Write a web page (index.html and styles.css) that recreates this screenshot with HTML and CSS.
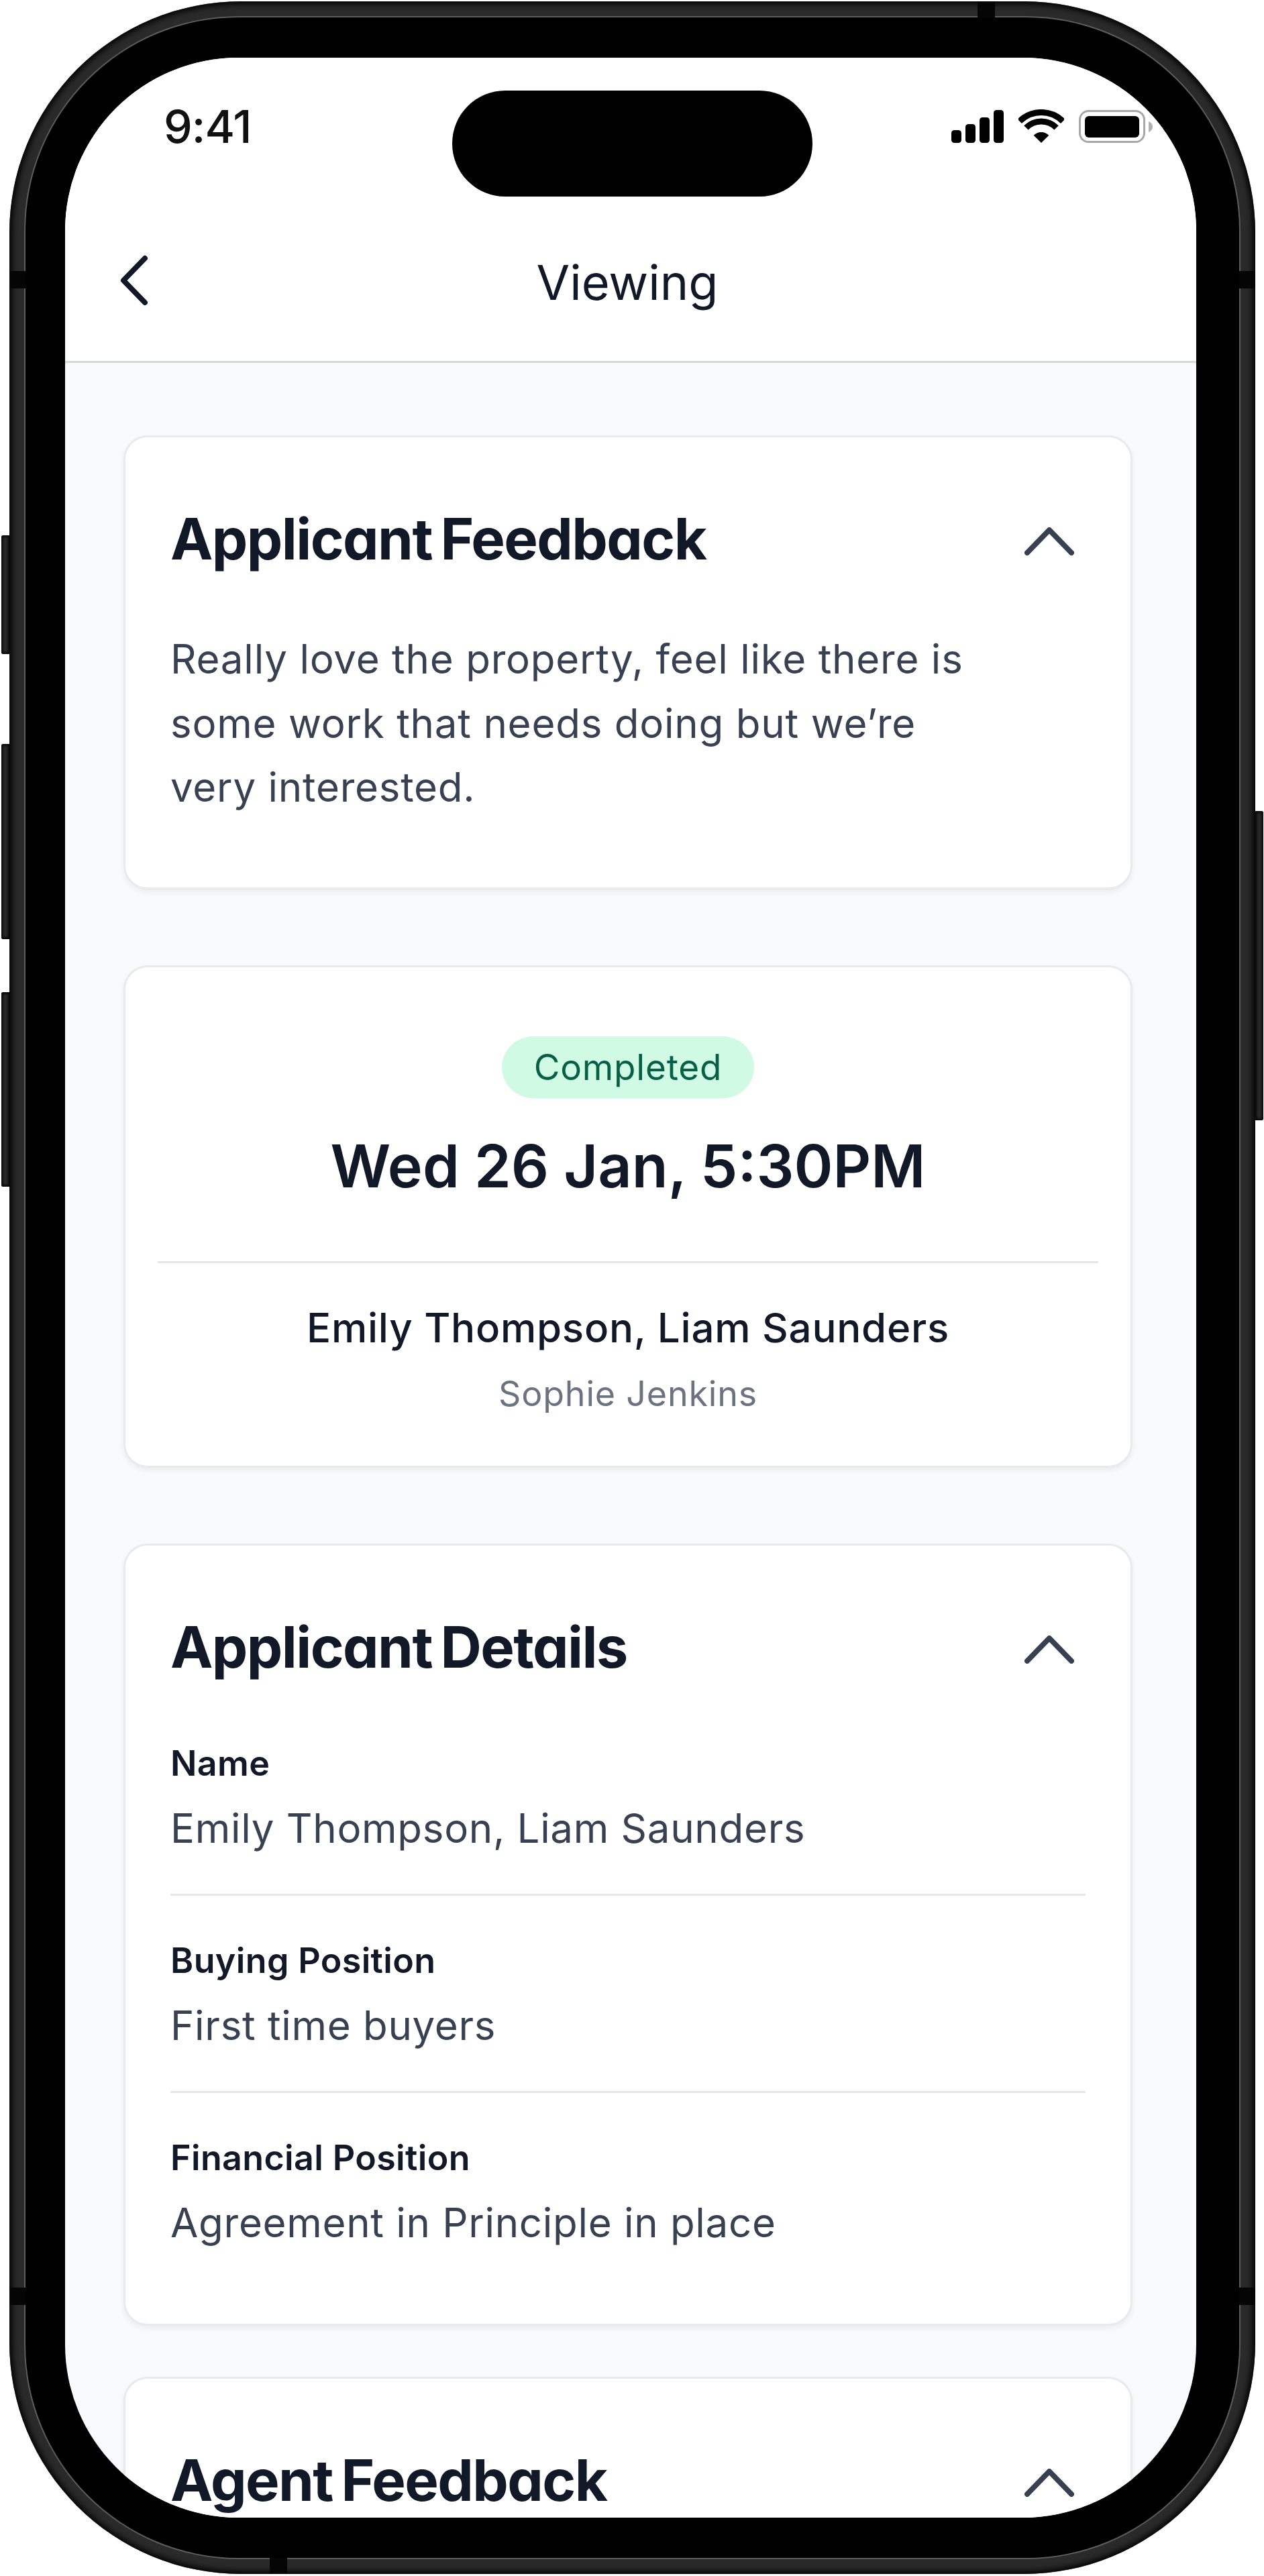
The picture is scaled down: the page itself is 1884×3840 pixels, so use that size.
FILE: index.html
```html
<!DOCTYPE html>
<html lang="en">
<head>
    <meta charset="UTF-8">
    <title>Viewing</title>
    <link rel="stylesheet" href="styles.css">
</head>
<body>
    <div class="phone">
        <!-- side buttons -->
        <span class="btn btn-mute"></span>
        <span class="btn btn-up"></span>
        <span class="btn btn-down"></span>
        <span class="btn btn-power"></span>
        <!-- antenna bands -->
        <span class="band band-lt"></span>
        <span class="band band-lb"></span>
        <span class="band band-rt"></span>
        <span class="band band-rb"></span>
        <span class="band-h band-top"></span>
        <span class="band-h band-bottom"></span>

        <div class="bezel">
            <div class="screen">
                <div class="status">
                    <div class="time">9:41</div>
                    <div class="island"></div>
                    <div class="status-icons">
                        <svg width="78" height="49" viewBox="0 0 78 49"><rect x="0" y="30" width="15" height="19" rx="4.5"/><rect x="21" y="21" width="15" height="28" rx="4.5"/><rect x="42" y="11" width="15" height="38" rx="4.5"/><rect x="63" y="0" width="15" height="49" rx="4.5"/></svg>
                        <svg class="wifi" width="68" height="50" viewBox="0 0 68 50"><path d="M1.8 17.8A45.5 45.5 0 0 1 66.2 17.8" fill="none" stroke="#000" stroke-width="9"/><path d="M11.4 27.4A32 32 0 0 1 56.6 27.4" fill="none" stroke="#000" stroke-width="9"/><path d="M34 50L22.7 38.7A16 16 0 0 1 45.3 38.7z"/></svg>
                        <svg width="110" height="49" viewBox="0 0 110 49"><rect x="1.5" y="1.5" width="96" height="46" rx="13" fill="none" stroke="#a8a8a8" stroke-width="3"/><rect x="9" y="9" width="81" height="32" rx="6"/><path d="M104 17v16c3-1 6-4 6-8s-3-7-6-8z" fill="#b0b0b0"/></svg>
                    </div>
                </div>

                <div class="topbar">
                    <div class="back">
                        <svg width="46" height="80" viewBox="0 0 46 80"><path d="M39 7L7 40l32 33" fill="none" stroke="#111827" stroke-width="8" stroke-linecap="round" stroke-linejoin="round"/></svg>
                    </div>
                    <div class="topbar-title">Viewing</div>
                </div>

                <div class="content">
                    <div class="card card-feedback">
                        <div class="card-head">
                            <h2>Applicant Feedback</h2>
                            <svg class="chev" width="74" height="42" viewBox="0 0 74 42"><path d="M4 38L37 4l33 34" fill="none" stroke="#374151" stroke-width="8" stroke-linecap="round" stroke-linejoin="round"/></svg>
                        </div>
                        <p class="body-text">Really love the property, feel like there is<br>some work that needs doing but we’re<br>very interested.</p>
                    </div>

                    <div class="card card-summary">
                        <span class="pill">Completed</span>
                        <div class="date">Wed 26 Jan, 5:30PM</div>
                        <div class="summary-line"></div>
                        <div class="names">Emily Thompson, Liam Saunders</div>
                        <div class="agent">Sophie Jenkins</div>
                    </div>

                    <div class="card card-details">
                        <div class="card-head">
                            <h2>Applicant Details</h2>
                            <svg class="chev" width="74" height="42" viewBox="0 0 74 42"><path d="M4 38L37 4l33 34" fill="none" stroke="#374151" stroke-width="8" stroke-linecap="round" stroke-linejoin="round"/></svg>
                        </div>
                        <div class="details">
                            <div class="detail">
                                <div class="label">Name</div>
                                <div class="value">Emily Thompson, Liam Saunders</div>
                            </div>
                            <div class="detail">
                                <div class="label">Buying Position</div>
                                <div class="value">First time buyers</div>
                            </div>
                            <div class="detail">
                                <div class="label">Financial Position</div>
                                <div class="value">Agreement in Principle in place</div>
                            </div>
                        </div>
                    </div>

                    <div class="card card-agent">
                        <div class="card-head">
                            <h2>Agent Feedback</h2>
                            <svg class="chev" width="74" height="42" viewBox="0 0 74 42"><path d="M4 38L37 4l33 34" fill="none" stroke="#374151" stroke-width="8" stroke-linecap="round" stroke-linejoin="round"/></svg>
                        </div>
                    </div>
                </div>
            </div>
        </div>
    </div>
</body>
</html>
```

FILE: styles.css
```css
*{
    margin: 0;
    padding: 0;
    box-sizing: border-box;
}

body{
    background-color: #fff;
    font-family: Inter, "Liberation Sans", sans-serif;
    width: 1884px;
    height: 3840px;
    overflow: hidden;
    padding: 2px 0 0 14px;
}

/* device */
.phone{
    position: relative;
    width: 1857px;
    height: 3835px;
    border-radius: 345px;
    background-color: #2a2a2a;
    box-shadow: inset 0 0 10px 4px #000;
    padding: 24px;
}

.bezel{
    height: 100%;
    border-radius: 318px;
    background-color: #000;
    box-shadow: 0 0 0 2px #5c5c5c;
    padding: 60px 64px 60px 59px;
}

.screen{
    height: 100%;
    border-radius: 258px;
    background-color: #f9fafb;
    overflow: hidden;
    display: flex;
    flex-direction: column;
}

.btn{
    position: absolute;
    left: -12px;
    width: 12px;
    background-color: #2b2b2b;
    border-radius: 3px 0 0 3px;
    box-shadow: inset 0 0 4px 2px #000;
}
.btn-mute{ top: 796px; height: 177px; }
.btn-up{ top: 1107px; height: 291px; }
.btn-down{ top: 1477px; height: 290px; }
.btn-power{
    left: auto;
    right: -12px;
    top: 1207px;
    height: 461px;
    border-radius: 0 3px 3px 0;
}

.band{
    position: absolute;
    width: 24px;
    height: 26px;
    background-color: #050505;
}
.band-lt{ left: 0; top: 402px; }
.band-lb{ left: 0; top: 3408px; }
.band-rt{ right: 0; top: 402px; }
.band-rb{ right: 0; top: 3408px; }

.band-h{
    position: absolute;
    width: 26px;
    height: 24px;
    background-color: #050505;
}
.band-top{ top: 0; left: 1443px; }
.band-bottom{ bottom: 0; left: 388px; }

/* status bar */
.status{
    flex-shrink: 0;
    display: grid;
    grid-template-columns: 577px 537px 1fr;
    background-color: #fff;
    padding-top: 49px;
}
.time{
    padding: 19px 0 0 147px;
    font-size: 68px;
    font-weight: 500;
    line-height: 68px;
    color: #111;
    letter-spacing: -1px;
}
.island{
    height: 158px;
    border-radius: 79px;
    background-color: #000;
}
.status-icons{
    display: flex;
    align-items: flex-start;
    justify-content: flex-end;
    gap: 22px;
    padding: 29px 65px 0 0;
}
.status-icons svg{
    fill: #000;
}
.status-icons .wifi{
    margin-top: -1px;
}

/* header */
.topbar{
    flex-shrink: 0;
    display: grid;
    grid-template-columns: 1fr auto 1fr;
    align-items: center;
    height: 248px;
    padding: 0 10px 0 0;
    background-color: #fff;
    border-bottom: 3px solid #d4d7dc;
}
.back{
    height: 80px;
    margin: 5px 0 0 80px;
}
.topbar-title{
    grid-column: 2;
    margin-top: 10px;
    font-size: 72px;
    color: #111827;
}

/* cards */
.content{
    padding: 108px 95px 0 87px;
    display: flex;
    flex-direction: column;
    gap: 113px;
}
.card{
    flex-shrink: 0;
    background-color: #fff;
    border: 3px solid #e8eaee;
    border-radius: 36px;
    box-shadow: 0 4px 8px rgba(17, 24, 39, .06);
}
.card-feedback{
    height: 677px;
    padding: 100px 67px 0;
}
.card-summary{
    height: 749px;
    padding: 103px 48px 0;
    display: flex;
    flex-direction: column;
    align-items: center;
}
.card-details{
    height: 1166px;
    padding: 100px 67px 0;
}
.card-agent{
    margin-top: -37px;
    height: 600px;
    padding: 100px 67px 0;
}

.card-head{
    display: flex;
    align-items: center;
    justify-content: space-between;
    padding-right: 17px;
}
.card-head h2{
    font-size: 85px;
    font-weight: 700;
    line-height: 103px;
    letter-spacing: -1.6px;
    word-spacing: -6px;
    color: #111827;
    font-feature-settings: "cv11";
}
.chev{
    margin-top: 6px;
}

.body-text{
    margin-top: 80px;
    font-size: 60px;
    line-height: 95.5px;
    letter-spacing: .78px;
    color: #374151;
}

.pill{
    height: 92px;
    padding: 0 48px;
    border-radius: 46px;
    background-color: #d1fae5;
    color: #065f46;
    font-size: 53px;
    letter-spacing: .8px;
    line-height: 92px;
}
.date{
    margin-top: 48px;
    font-size: 88px;
    font-weight: 600;
    line-height: 106px;
    color: #111827;
}
.summary-line{
    align-self: stretch;
    height: 3px;
    margin-top: 89px;
    background-color: #e5e7eb;
}
.names{
    margin-top: 56px;
    font-size: 60px;
    font-weight: 500;
    letter-spacing: .76px;
    line-height: 80px;
    color: #111827;
}
.agent{
    margin-top: 23px;
    font-size: 52px;
    letter-spacing: .8px;
    line-height: 72px;
    color: #6b7280;
}

.details{
    margin-top: 25px;
}
.detail{
    height: 294px;
    padding-top: 61px;
    border-bottom: 3px solid #e5e7eb;
}
.detail:last-child{
    border-bottom: 0;
}
.label{
    font-size: 52px;
    font-weight: 600;
    letter-spacing: .35px;
    line-height: 72px;
    color: #111827;
}
.value{
    margin-top: 20px;
    font-size: 60px;
    letter-spacing: .7px;
    line-height: 80px;
    color: #374151;
}
```
